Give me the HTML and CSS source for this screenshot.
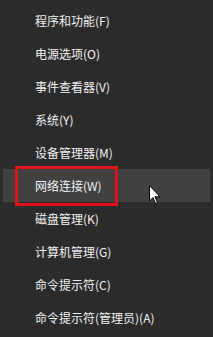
FILE: index.html
```html
<!DOCTYPE html>
<html>
<head>
<meta charset="utf-8">
<link rel="stylesheet" href="styles.css">
</head>
<body>
<ul class="menu">
  <li class="item"><span class="label">程序和功能(F)</span></li>
  <li class="item"><span class="label">电源选项(O)</span></li>
  <li class="item"><span class="label">事件查看器(V)</span></li>
  <li class="item"><span class="label">系统(Y)</span></li>
  <li class="item"><span class="label">设备管理器(M)</span></li>
  <li class="item active"><span class="label marked">网络连接(W)</span>
    <svg class="cursor" width="13" height="20" viewBox="0 0 13 20"><path d="M0.5 0.5 L0.5 16 L4 12.5 L6.5 18.5 L8.5 17.5 L6 11.8 L11 11.8 Z" fill="#fff" stroke="#000" stroke-width="1"/></svg>
  </li>
  <li class="item"><span class="label">磁盘管理(K)</span></li>
  <li class="item"><span class="label">计算机管理(G)</span></li>
  <li class="item"><span class="label">命令提示符(C)</span></li>
  <li class="item"><span class="label">命令提示符(管理员)(A)</span></li>
</ul>
</body>
</html>
```
FILE: styles.css
```css
html, body {
  margin: 0;
  padding: 0;
  background: #2b2b2b;
}
body {
  width: 213px;
  height: 337px;
  overflow: hidden;
  font-family: "Noto Sans CJK SC", "Noto Sans", sans-serif;
  font-size: 12px;
  color: #f2f2f2;
}
.menu {
  list-style: none;
  margin: 0;
  padding: 4px 3px 0 3px;
}
.item {
  position: relative;
  height: 33px;
  display: flex;
  align-items: center;
  padding-left: 32px;
}
.active {
  background: #414141;
}
.label {
  position: relative;
  line-height: 16px;
}
.marked::after {
  content: "";
  position: absolute;
  left: -20px;
  right: -16px;
  top: -12px;
  bottom: -12px;
  border: 3px solid #e0141c;
}
.cursor {
  position: absolute;
  left: 146px;
  top: 16px;
}
```
